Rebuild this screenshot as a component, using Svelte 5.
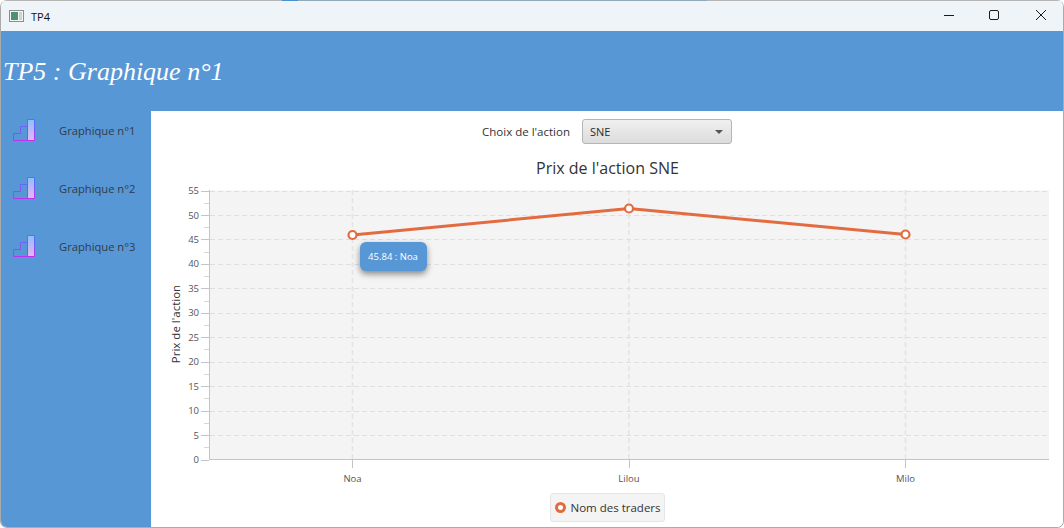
<script>
  const yTicks = Array.from({ length: 12 }, (_, i) => i * 5);
  const minor = Array.from({ length: 11 }, (_, i) => i * 5 + 2.5);
  const y = (v) => 459.5 - v * 4.89;
  const cats = [
    { name: 'Noa', x: 352.5, y: 235 },
    { name: 'Lilou', x: 629, y: 208.5 },
    { name: 'Milo', x: 905.5, y: 234.5 }
  ];
  const items = ['Graphique n°1', 'Graphique n°2', 'Graphique n°3'];
  const line = cats.map((c) => `${c.x},${c.y}`).join(' ');
</script>

<div class="window">
  <div class="edge"></div>
  <div class="titlebar">
    <div class="tb-left">
      <svg class="appicon" width="15" height="12" viewBox="0 0 15 12">
        <rect x="0.5" y="0.5" width="14" height="11" fill="#f4f6f4" stroke="#8a8f8c" />
        <rect x="2" y="2" width="7" height="8" fill="#4f8f7a" />
        <path d="M10 3h3M10 5h3M10 7h3M10 9h3" stroke="#a8b0ac" stroke-width="1" />
      </svg>
      <span>TP4</span>
    </div>
    <div class="controls">
      <svg width="46" height="31" viewBox="0 0 46 31"><path d="M19 15.5h10" stroke="#1a1a1a" /></svg>
      <svg width="46" height="31" viewBox="0 0 46 31"><rect x="18.5" y="10.5" width="9" height="9" rx="1.5" fill="none" stroke="#1a1a1a" /></svg>
      <svg width="46" height="31" viewBox="0 0 46 31"><path d="M19 10l10 10M29 10l-10 10" stroke="#1a1a1a" /></svg>
    </div>
  </div>
  <header class="banner"><h1>TP5 : Graphique n°1</h1></header>
  <div class="body">
    <nav class="side">
      {#each items as item, i}
        <div class="item">
          <svg width="24" height="24" viewBox="0 0 24 24">
            <defs>
              <linearGradient id={`s${i}`} x1="0" y1="0" x2="0" y2="1">
                <stop offset="0" stop-color="#3f7bff" />
                <stop offset="1" stop-color="#c030f0" />
              </linearGradient>
              <linearGradient id={`f${i}`} x1="0" y1="0" x2="0" y2="1">
                <stop offset="0" stop-color="#8ec0fa" />
                <stop offset="1" stop-color="#e6b4f4" />
              </linearGradient>
            </defs>
            <rect x="15.5" y="1.5" width="7" height="21" fill={`url(#f${i})`} />
            <path d="M15.5 22.5H1.5V15.5H8.5V8.5H15.5M15.5 1.5H22.5V22.5H15.5Z" fill="none" stroke={`url(#s${i})`} />
          </svg>
          <span>{item}</span>
        </div>
      {/each}
    </nav>
    <main class="main">
      <div class="toolbar">
        <span class="lbl">Choix de l'action</span>
        <div class="combo"><span>SNE</span><i class="arrow"></i></div>
      </div>
      <div class="chart">
        <svg width="913" height="345" viewBox="151 154 913 345">
          <text x="607.5" y="174" class="title" text-anchor="middle">Prix de l'action SNE</text>
          <rect x="209.5" y="190.5" width="839.5" height="269" fill="#f4f4f4" />
          {#each yTicks.slice(1) as t}
            <line x1="210" x2="1049" y1={Math.round(y(t)) + 0.5} y2={Math.round(y(t)) + 0.5} class="grid" />
          {/each}
          {#each cats as c}
            <line x1={c.x} x2={c.x} y1="190" y2="459" class="grid vertical" />
            <line x1={Math.floor(c.x) + 0.5} x2={Math.floor(c.x) + 0.5} y1="460" y2="468" class="tick" />
            <text x={c.x} y="482" class="axis" text-anchor="middle">{c.name}</text>
          {/each}
          {#each yTicks as t}
            <line x1="201" x2="209" y1={Math.round(y(t)) + 0.5} y2={Math.round(y(t)) + 0.5} class="tick" />
            <text x="199" y={y(t) + 3.5} class="axis" text-anchor="end">{t}</text>
          {/each}
          {#each minor as t}
            <line x1="204" x2="209" y1={Math.round(y(t)) + 0.5} y2={Math.round(y(t)) + 0.5} class="minor" />
          {/each}
          <line x1="209.5" x2="209.5" y1="190" y2="460" class="tick" />
          <line x1="209" x2="1049" y1="459.5" y2="459.5" class="tick" />
          <text transform="translate(180 324) rotate(-90)" class="ylabel" text-anchor="middle">Prix de l'action</text>
          <polyline points={line} class="series" />
          {#each cats as c}
            <circle cx={c.x} cy={c.y} r="4" class="dot" />
          {/each}
        </svg>
        <div class="tooltip">45.84 : Noa</div>
      </div>
      <div class="legend"><i class="mark"></i><span>Nom des traders</span></div>
    </main>
  </div>
</div>

<style>
  :global(body) {
    margin: 0;
    background: #fff;
  }
  .window {
    width: 1064px;
    height: 528px;
    box-sizing: border-box;
    display: flex;
    flex-direction: column;
    overflow: hidden;
    border: 1px solid #ababab;
    border-top: 0;
    border-radius: 7px;
    font-family: "Open Sans", "Noto Sans", sans-serif;
  }
  .edge {
    height: 1px;
    flex: none;
    background: linear-gradient(
      to right,
      #b4b4b4 0 281px,
      #4a8fcf 281px 297px,
      #8fa9ba 297px 706px,
      #b4b4b4 706px
    );
  }
  .titlebar {
    height: 30px;
    flex: none;
    display: flex;
    justify-content: space-between;
    background: #eff4f9;
  }
  .tb-left {
    display: flex;
    align-items: center;
    gap: 7px;
    padding-left: 8px;
    font-size: 11px;
    color: #111;
  }
  .appicon {
    display: block;
  }
  .controls {
    display: flex;
    margin-top: -1px;
  }
  .controls svg {
    display: block;
  }
  .banner {
    height: 80px;
    flex: none;
    background: #5797d6;
    display: flex;
    align-items: center;
  }
  h1 {
    margin: 2px 0 0 2px;
    font-family: "Liberation Serif", serif;
    font-style: italic;
    font-weight: 400;
    font-size: 26px;
    color: #fff;
  }
  .body {
    flex: 1;
    display: flex;
    min-height: 0;
  }
  .side {
    width: 150px;
    flex: none;
    background: #5797d6;
    padding-top: 7px;
    box-sizing: border-box;
    display: flex;
    flex-direction: column;
    gap: 34px;
  }
  .item {
    display: flex;
    align-items: center;
    height: 24px;
    padding-left: 11px;
    gap: 23px;
    font-size: 11.2px;
    color: #333a48;
  }
  .item svg {
    display: block;
    flex: none;
  }
  .main {
    flex: 1;
    min-width: 0;
    background: #fff;
    display: flex;
    flex-direction: column;
    align-items: center;
  }
  .toolbar {
    height: 41px;
    flex: none;
    display: flex;
    align-items: center;
    gap: 12px;
  }
  .lbl {
    font-size: 11.5px;
    color: #333;
  }
  .combo {
    width: 150px;
    height: 25px;
    box-sizing: border-box;
    border: 1px solid #b5b5b5;
    border-radius: 3px;
    background: linear-gradient(#f0f0f0, #dcdcdc);
    display: flex;
    align-items: center;
    justify-content: space-between;
    padding: 0 8px 0 7px;
    font-size: 11px;
    color: #2b2b2b;
  }
  .arrow {
    width: 0;
    height: 0;
    border-left: 4px solid transparent;
    border-right: 4px solid transparent;
    border-top: 4px solid #555;
  }
  .chart {
    position: relative;
    width: 913px;
    height: 341px;
    margin-top: 2px;
    margin-bottom: -2px;
    flex: none;
  }
  .chart svg {
    display: block;
  }
  .title {
    font-size: 16px;
    fill: #333;
  }
  .axis {
    font-size: 9.5px;
    fill: #555;
  }
  .ylabel {
    font-size: 11.5px;
    fill: #333;
  }
  .grid {
    stroke: #dfdfdf;
    stroke-dasharray: 5 3;
  }
  .vertical {
    stroke-width: 1.6;
    stroke: #e4e4e4;
  }
  .tick {
    stroke: #c4c4c4;
  }
  .minor {
    stroke: #d6d6d6;
  }
  .series {
    fill: none;
    stroke: #e26c3f;
    stroke-width: 3;
  }
  .dot {
    fill: #fff;
    stroke: #e26c3f;
    stroke-width: 2.2;
  }
  .tooltip {
    position: absolute;
    left: 209px;
    top: 88px;
    width: 67px;
    height: 29px;
    border-radius: 6px;
    background: #5797d6;
    color: #fff;
    font-size: 9.5px;
    display: flex;
    align-items: center;
    justify-content: center;
    box-shadow: 0 3px 6px rgba(0, 0, 0, 0.45);
  }
  .legend {
    height: 29px;
    width: 115px;
    box-sizing: border-box;
    display: flex;
    align-items: center;
    gap: 5px;
    padding-left: 4px;
    background: #f4f4f4;
    border: 1px solid #e6e6e6;
    border-radius: 3px;
    font-size: 11.5px;
    color: #333;
  }
  .mark {
    width: 5px;
    height: 5px;
    border: 3px solid #e26c3f;
    background: #fff;
    border-radius: 50%;
    flex: none;
  }
</style>
